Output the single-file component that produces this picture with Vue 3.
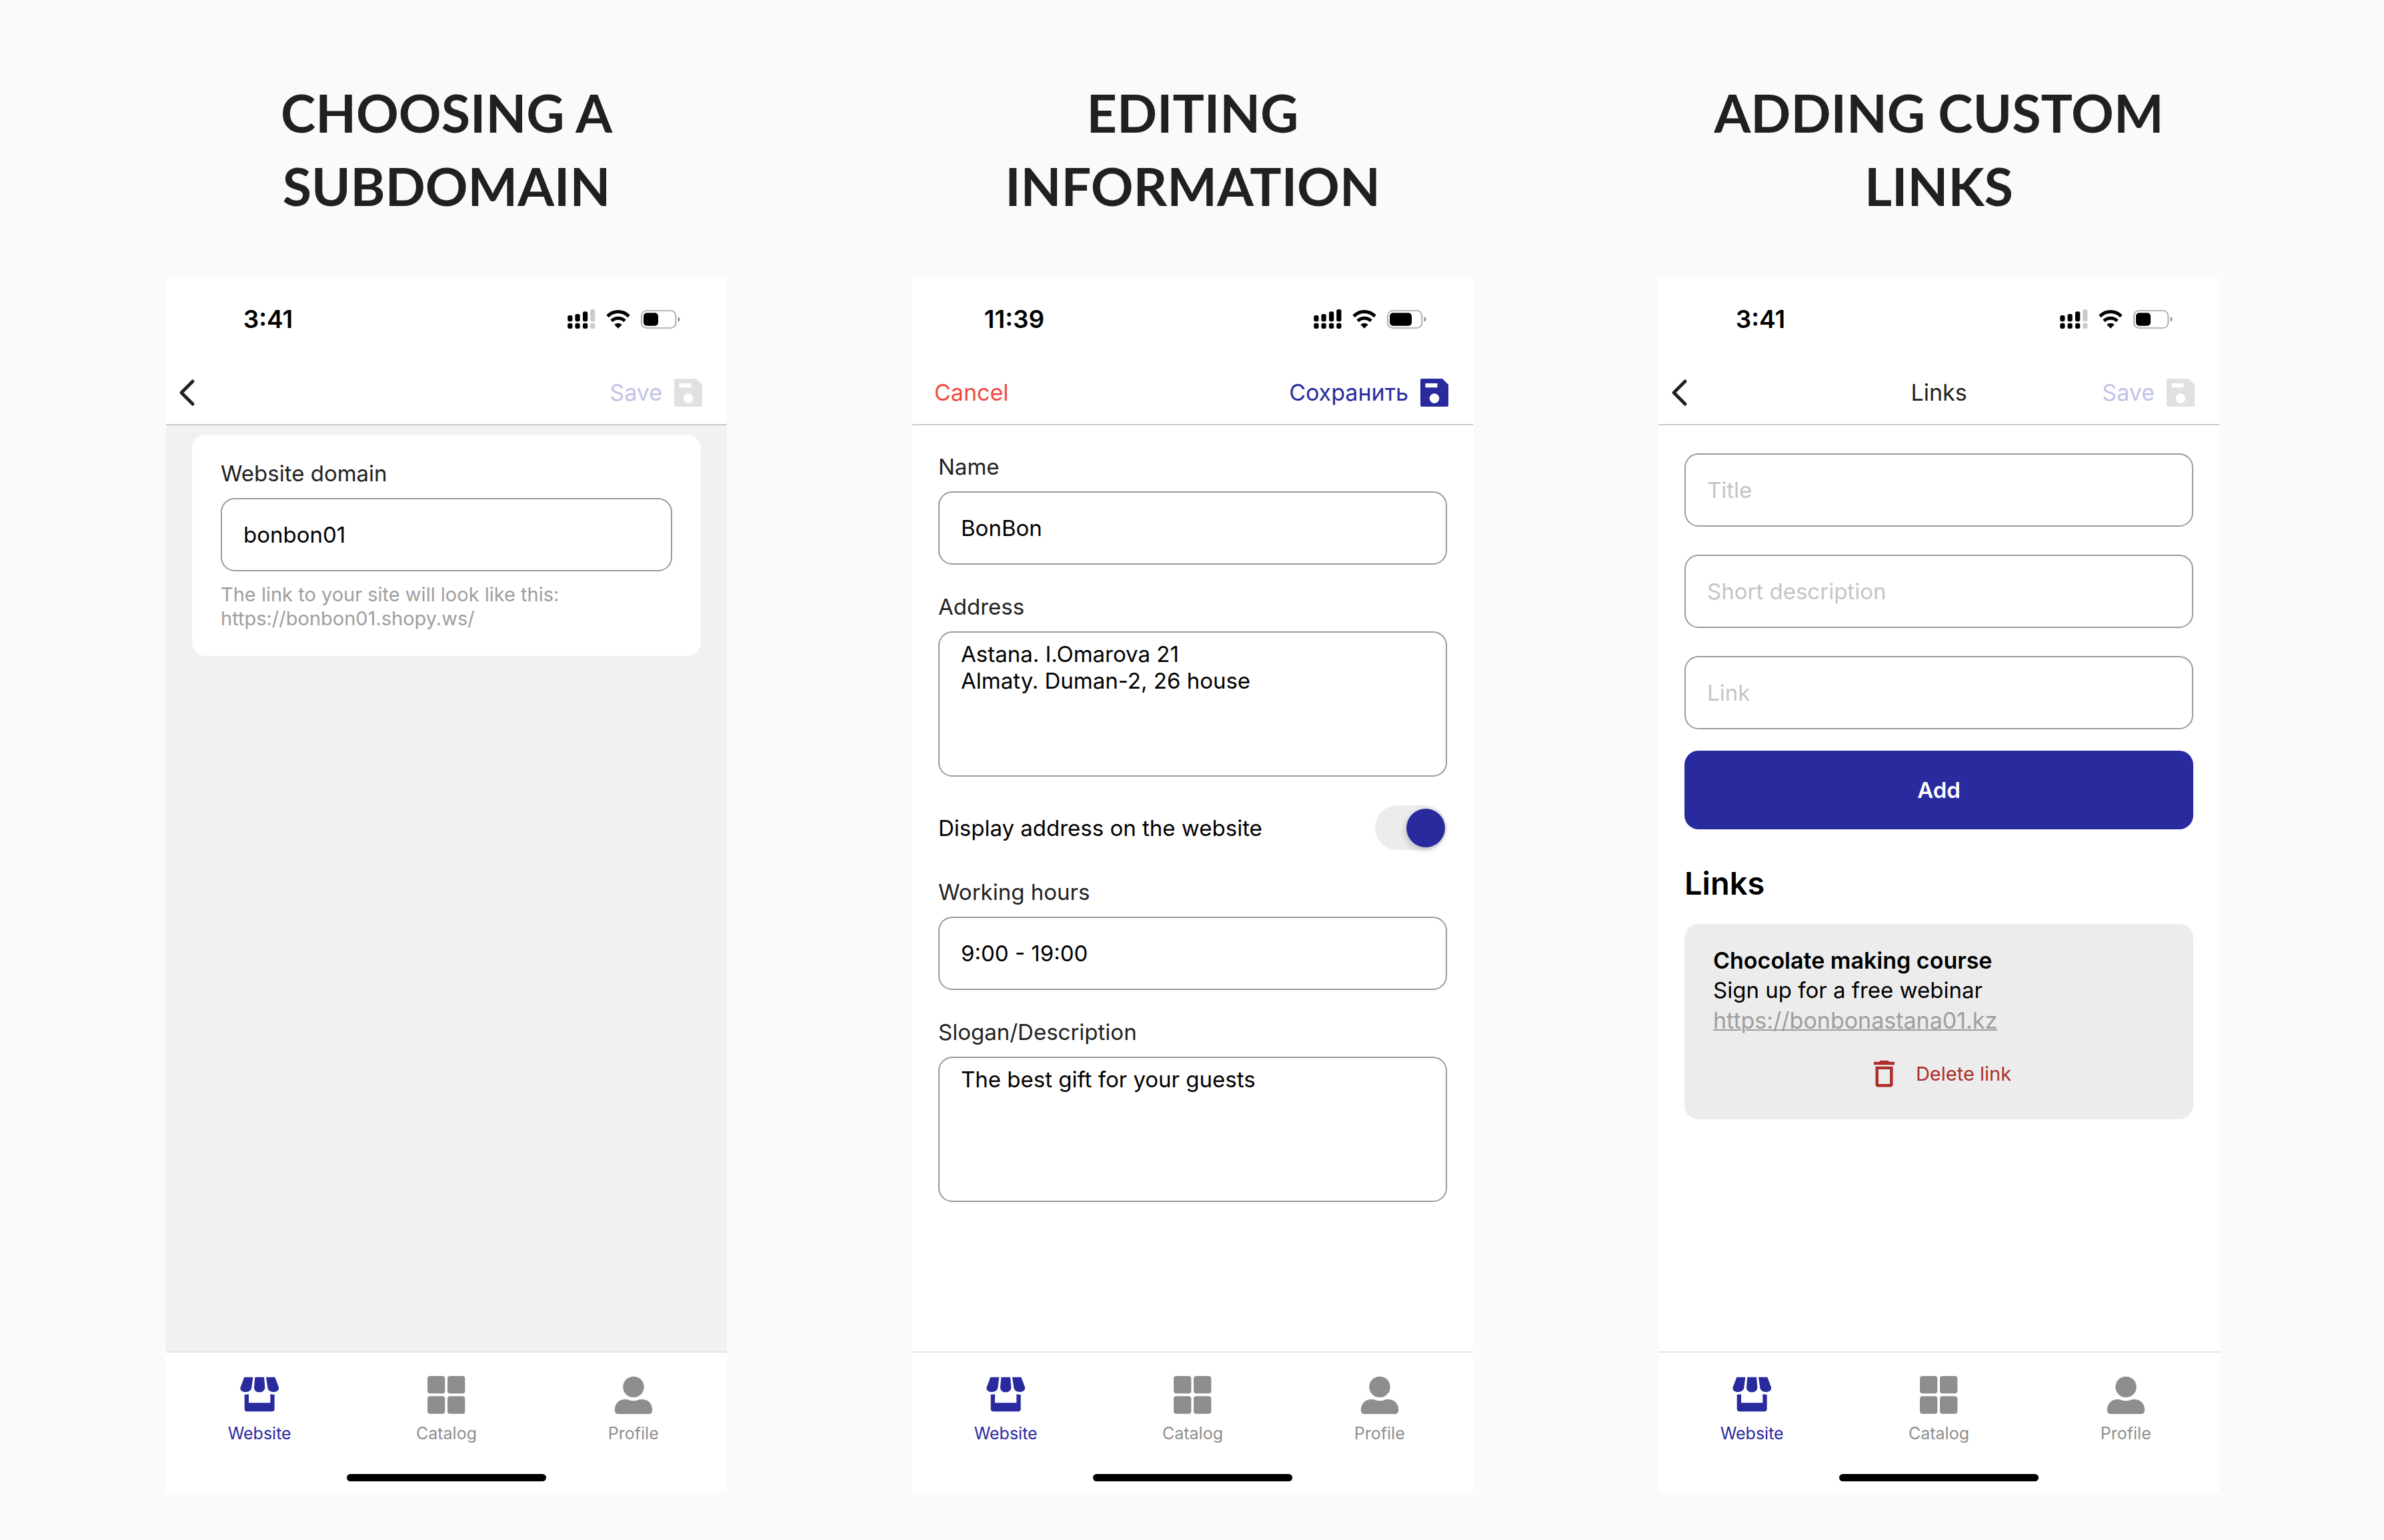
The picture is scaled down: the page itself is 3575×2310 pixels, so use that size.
<script setup>
import { ref } from 'vue'

const domain = ref('bonbon01')
const name = ref('BonBon')
const address = ref('Astana. I.Omarova 21\nAlmaty. Duman-2, 26 house')
const showAddress = ref(true)
const hours = ref('9:00 - 19:00')
const slogan = ref('The best gift for your guests')
const newLink = ref({ title: '', description: '', link: '' })

const screens = [
  { id: 'domain', heading: ['CHOOSING A', 'SUBDOMAIN'], time: '3:41', bars: 3, charge: 66 },
  { id: 'info', heading: ['EDITING', 'INFORMATION'], time: '11:39', bars: 4, charge: 99 },
  { id: 'links', heading: ['ADDING CUSTOM', 'LINKS'], time: '3:41', bars: 3, charge: 66, title: 'Links' },
]

const signal = [
  { x: 0, y: 27 },
  { x: 34, y: 21 },
  { x: 69, y: 10 },
  { x: 103, y: 0 },
]

const linkFields = [
  { key: 'title', label: 'Title' },
  { key: 'description', label: 'Short description' },
  { key: 'link', label: 'Link' },
]
</script>

<template>
  <main class="page">
    <section v-for="s in screens" :key="s.id" class="column">
      <h1 class="heading">{{ s.heading[0] }}<br />{{ s.heading[1] }}</h1>

      <div class="phone">
        <div class="status">
          <span class="time">{{ s.time }}</span>
          <div class="status-icons">
            <svg width="42" height="29" viewBox="0 0 126 88" aria-hidden="true">
              <g v-for="(b, i) in signal" :key="i" :fill="i < s.bars ? '#000' : '#cbcbcb'">
                <rect :x="b.x" :y="b.y" width="22" :height="55 - b.y" rx="8" />
                <rect :x="b.x" y="63" width="22" height="25" rx="8" />
              </g>
            </svg>
            <svg width="36" height="28" viewBox="0 0 108 84" aria-hidden="true">
              <g fill="none" stroke="#000" stroke-width="15">
                <path d="M6 28C34 1 74 1 102 28" />
                <path d="M24 49C41 33 67 33 84 49" />
              </g>
              <path d="M37 66C47 57 61 57 71 66L54 83Z" />
            </svg>
            <svg width="59" height="28" viewBox="0 0 177 84" aria-hidden="true">
              <rect x="3" y="3" width="154" height="78" rx="23" fill="none" stroke="#a0a0a0" stroke-width="5" />
              <rect x="12" y="13" :width="s.charge" height="58" rx="15" />
              <path d="M167 30Q176 34 176 42T167 54Z" fill="#8c8c8c" />
            </svg>
          </div>
        </div>

        <header class="bar">
          <button v-if="s.id === 'info'" type="button" class="text-button cancel">Cancel</button>
          <button v-else type="button" class="back" aria-label="Back">
            <svg width="26" height="42" viewBox="0 0 26 42" aria-hidden="true">
              <path d="M22 4L5 21L22 38" fill="none" stroke="#212121" stroke-width="5" stroke-linecap="round" stroke-linejoin="round" />
            </svg>
          </button>
          <span class="bar-title">{{ s.title }}</span>
          <button type="button" class="text-button save" :class="{ inactive: s.id !== 'info' }">
            {{ s.id === 'info' ? 'Сохранить' : 'Save' }}
            <svg class="save-icon" width="42" height="42" viewBox="0 0 42 42" aria-hidden="true">
              <path
                fill-rule="evenodd"
                d="M2 0H33L42 9V40Q42 42 40 42H2Q0 42 0 40V2Q0 0 2 0ZM7.5 7V13.2H25.5V7ZM21 22.3A7.3 7.3 0 1 0 21 36.9A7.3 7.3 0 1 0 21 22.3Z"
              />
            </svg>
          </button>
        </header>

        <div v-if="s.id === 'domain'" class="screen muted">
          <div class="domain-card">
            <label for="domain" class="label">Website domain</label>
            <input id="domain" v-model="domain" type="text" class="input" />
            <p class="hint">The link to your site will look like this:<br />https://{{ domain }}.shopy.ws/</p>
          </div>
        </div>

        <form v-else-if="s.id === 'info'" class="screen form" @submit.prevent>
          <div class="field">
            <label for="name" class="label">Name</label>
            <input id="name" v-model="name" type="text" class="input" />
          </div>
          <div class="field">
            <label for="address" class="label">Address</label>
            <textarea id="address" v-model="address" class="input area"></textarea>
          </div>
          <div class="toggle-row">
            <label for="show-address">Display address on the website</label>
            <input id="show-address" v-model="showAddress" type="checkbox" class="toggle" />
          </div>
          <div class="field">
            <label for="hours" class="label">Working hours</label>
            <input id="hours" v-model="hours" type="text" class="input" />
          </div>
          <div class="field">
            <label for="slogan" class="label">Slogan/Description</label>
            <textarea id="slogan" v-model="slogan" class="input area"></textarea>
          </div>
        </form>

        <div v-else class="screen links">
          <form class="link-form" @submit.prevent>
            <input
              v-for="f in linkFields"
              :key="f.key"
              v-model="newLink[f.key]"
              type="text"
              class="input"
              :placeholder="f.label"
              :aria-label="f.label"
            />
            <button type="submit" class="add">Add</button>
          </form>
          <h2 class="links-title">Links</h2>
          <article class="link-card">
            <h3 class="link-name">Chocolate making course</h3>
            <p class="link-text">Sign up for a free webinar</p>
            <a class="link-url" href="https://bonbonastana01.kz">https://bonbonastana01.kz</a>
            <button type="button" class="delete">
              <svg width="53" height="53" viewBox="0 0 24 24" aria-hidden="true">
                <path
                  fill="#ad2d28"
                  fill-rule="evenodd"
                  d="M9.5 3H14.5L15.5 4H19V6H5V4H8.5ZM6.1 7.1H17.9V19.2Q17.9 21 16.1 21H7.9Q6.1 21 6.1 19.2ZM8.1 9.1V19H15.9V9.1Z"
                />
              </svg>
              Delete link
            </button>
          </article>
        </div>

        <footer class="footer">
          <nav class="tabs">
            <a href="#website" class="tab active">
              <svg width="58" height="58" viewBox="61 69 174 174" aria-hidden="true">
                <path d="M80 77H119L113 124C112 136 102 144 87 144C70 144 59 135 63 122Z" />
                <path d="M128 77H169L173 122C173 136 163 145 148 145C133 145 124 136 124 122Z" />
                <path d="M218 77H178L185 124C186 136 196 144 211 144C228 144 238 135 235 122Z" />
                <path d="M81 156L100 154V193H197V154L216 156V220Q216 232 204 232H93Q81 232 81 220Z" />
              </svg>
              Website
            </a>
            <a href="#catalog" class="tab">
              <svg width="58" height="58" viewBox="0 0 174 174" aria-hidden="true">
                <rect x="3" y="3" width="79" height="79" rx="12" />
                <rect x="93" y="3" width="79" height="79" rx="12" />
                <rect x="3" y="94" width="79" height="79" rx="12" />
                <rect x="93" y="94" width="79" height="79" rx="12" />
              </svg>
              Catalog
            </a>
            <a href="#profile" class="tab">
              <svg width="58" height="58" viewBox="0 0 58 58" aria-hidden="true">
                <circle cx="29" cy="17.4" r="15.7" />
                <path d="M15 36Q20 35.5 22 37Q29 39.5 36 37Q38 35.5 43 36C53 37 57 44 57.2 52Q57 58 52 58H6Q1 58 .8 52C1 44 5 37 15 36Z" />
              </svg>
              Profile
            </a>
          </nav>
          <div class="home-bar"></div>
        </footer>
      </div>
    </section>
  </main>
</template>

<style>
body {
  margin: 0;
  background: #fafafa;
}
</style>

<style scoped>
.page,
.page * {
  box-sizing: border-box;
}

.page {
  display: grid;
  grid-template-columns: repeat(3, minmax(0, 1fr));
  gap: 278px;
  min-height: 100vh;
  padding: 114px 247px 71px 249px;
  background: #fafafa;
  color: #000;
  font-family: Inter, 'Liberation Sans', sans-serif;
  font-size: 33px;
  line-height: 40px;
}

h1,
h2,
h3,
p {
  margin: 0;
}

svg {
  display: block;
  flex: none;
}

button,
input,
textarea {
  font: inherit;
  color: inherit;
}

button {
  padding: 0;
  border: 0;
  background: none;
  cursor: pointer;
}

.column {
  display: flex;
  flex-direction: column;
}

.heading {
  margin-bottom: 82px;
  color: #202020;
  font-family: Lato, 'Open Sans', sans-serif;
  font-size: 79px;
  font-weight: 700;
  line-height: 110px;
  text-align: center;
  white-space: nowrap;
}

.phone {
  display: flex;
  flex: 1;
  flex-direction: column;
  background: #fff;
}

.status {
  display: flex;
  align-items: center;
  justify-content: space-between;
  height: 125px;
  padding-right: 70px;
}

.time {
  width: 306px;
  font-size: 37px;
  font-weight: 600;
  text-align: center;
}

.status-icons {
  display: flex;
  align-items: center;
  gap: 16px;
}

.bar {
  display: grid;
  grid-template-columns: 1fr auto 1fr;
  align-items: center;
  height: 97px;
  border-bottom: 2px solid #c8c8c8;
  font-size: 34px;
}

.back {
  justify-self: start;
  margin-left: 18px;
}

.bar-title {
  color: #212121;
}

.text-button {
  display: flex;
  align-items: center;
  gap: 18px;
}

.cancel {
  justify-self: start;
  margin-left: 33px;
  color: #ef4b40;
}

.save {
  justify-self: end;
  margin-right: 37px;
  color: #2a2a9f;
}

.save-icon {
  fill: #2a2a9f;
}

.save.inactive {
  color: #c2c2e6;
}

.inactive .save-icon {
  fill: #e1e1e1;
}

.screen {
  flex: 1;
  padding: 42px 39px;
}

.screen.muted {
  padding: 14px 39px;
  background: #f1f1f1;
}

.domain-card {
  padding: 38px 43px;
  border-radius: 21px;
  background: #fff;
}

.label {
  display: block;
  margin-bottom: 17px;
  color: #212121;
}

.input {
  display: block;
  width: 100%;
  height: 110px;
  padding: 0 32px;
  border: 2px solid #9a9a9a;
  border-radius: 21px;
  outline: none;
  background: #fff;
}

.input::placeholder {
  color: #c5c5c5;
  opacity: 1;
}

.area {
  height: 218px;
  padding: 12px 32px;
  resize: none;
}

.hint {
  margin-top: 17px;
  color: #9e9e9e;
  font-size: 29px;
  line-height: 36px;
}

.form {
  display: flex;
  flex-direction: column;
  gap: 43px;
}

.toggle-row {
  display: flex;
  align-items: center;
  justify-content: space-between;
}

.toggle {
  display: flex;
  align-items: center;
  width: 108px;
  height: 67px;
  margin: 0;
  padding: 0 3px;
  border-radius: 34px;
  appearance: none;
  background: #ececec;
  cursor: pointer;
}

.toggle::before {
  width: 58px;
  height: 58px;
  border-radius: 50%;
  background: #fff;
  box-shadow: -2px 4px 10px rgba(0, 0, 0, 0.18);
  content: '';
}

.toggle:checked {
  justify-content: flex-end;
}

.toggle:checked::before {
  background: #2a2a9f;
}

.link-form {
  display: flex;
  flex-direction: column;
  gap: 42px;
}

.add {
  height: 118px;
  margin-top: -10px;
  border-radius: 21px;
  background: #2a2a9f;
  color: #fff;
  font-weight: 600;
}

.links-title {
  margin: 53px 0 33px;
  font-size: 47px;
  font-weight: 600;
  line-height: 56px;
}

.link-card {
  display: flex;
  flex-direction: column;
  align-items: flex-start;
  padding: 32px 43px 42px;
  border-radius: 21px;
  background: #ececec;
  line-height: 45px;
}

.link-name {
  font-size: 34px;
  font-weight: 600;
}

.link-url {
  color: #9e9e9e;
  font-size: 34px;
  text-decoration: underline;
  text-decoration-thickness: 2px;
}

.delete {
  display: flex;
  align-items: center;
  align-self: center;
  gap: 21px;
  margin-top: 31px;
  color: #ad2d28;
  font-size: 29px;
}

.footer {
  display: flex;
  flex-direction: column;
  align-items: center;
  gap: 45px;
  padding: 34px 0 17px;
  border-top: 2px solid #e4e4e4;
}

.tabs {
  display: flex;
  width: 100%;
}

.tab {
  display: flex;
  flex: 1;
  flex-direction: column;
  align-items: center;
  gap: 13px;
  color: #8e8e8e;
  fill: #8e8e8e;
  font-size: 25px;
  line-height: 32px;
  text-decoration: none;
}

.tab.active {
  color: #2a2a9f;
  fill: #2a2a9f;
}

.home-bar {
  width: 299px;
  height: 11px;
  border-radius: 6px;
  background: #000;
}
</style>
